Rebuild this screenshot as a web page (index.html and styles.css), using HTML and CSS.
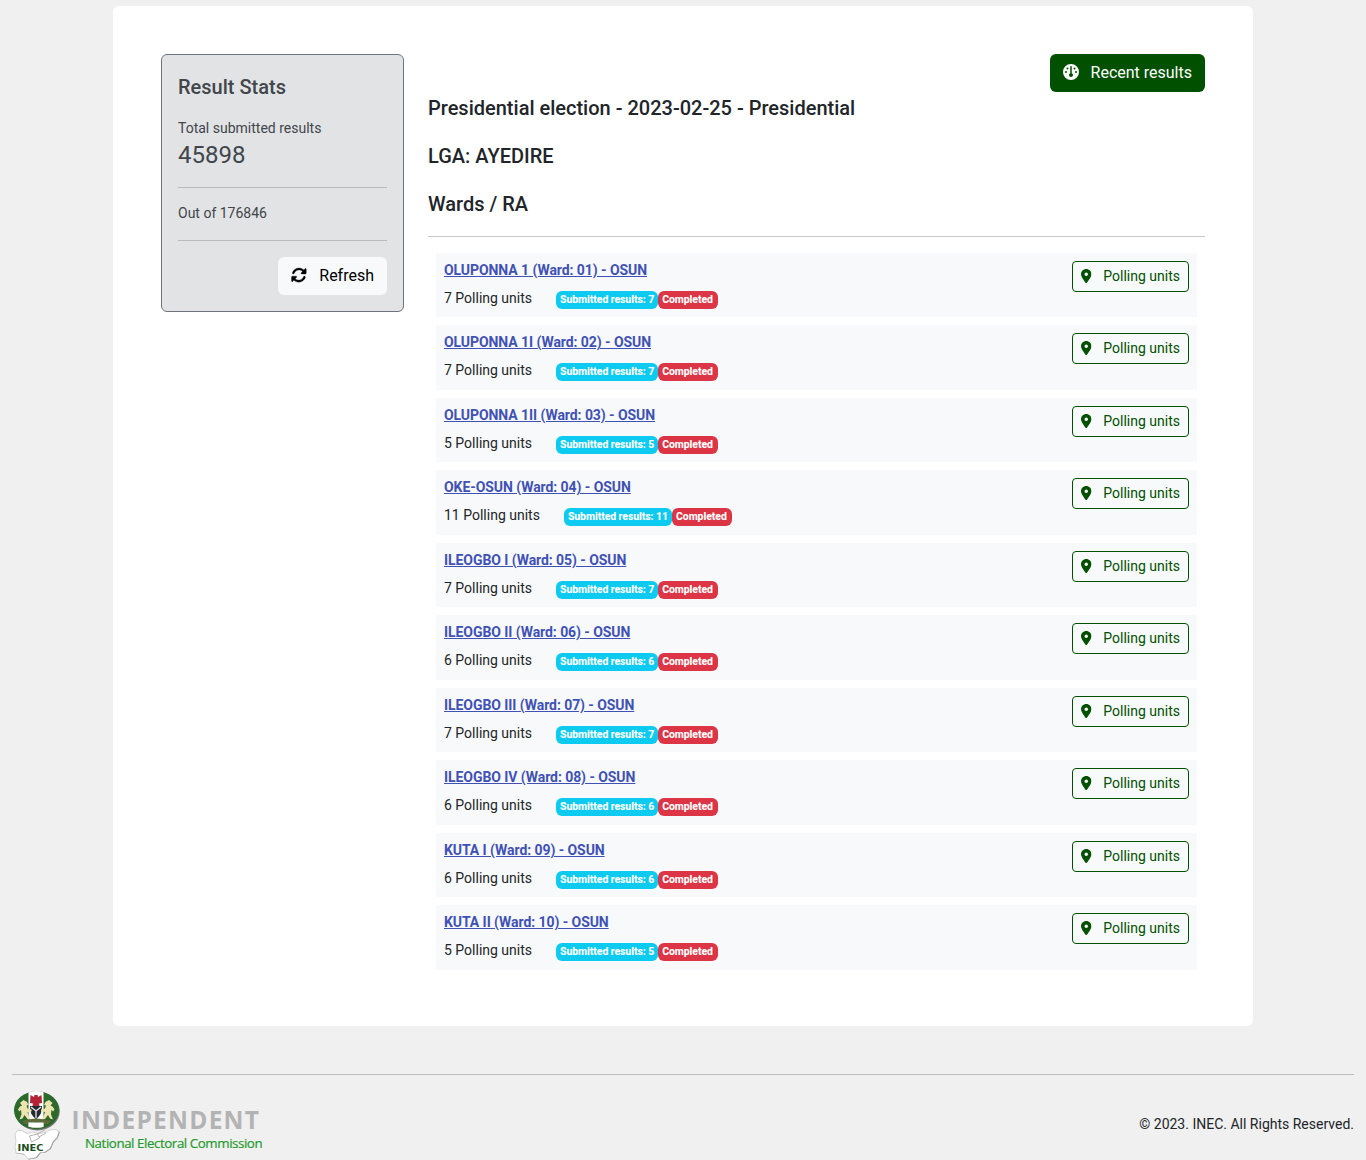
FILE: index.html
```html
<!DOCTYPE html>
<html lang="en">
<head>
<meta charset="utf-8">
<title>INEC Results - Wards</title>
<link rel="stylesheet" href="styles.css">
</head>
<body>
<svg class="defs" aria-hidden="true">
  <symbol id="pin" viewBox="0 0 384 512"><path d="M215.7 499.2C267 435 384 279.4 384 192C384 86 298 0 192 0S0 86 0 192c0 87.400 117 243 168.300 307.200c12.300 15.300 35.100 15.300 47.400 0zM192 128a64 64 0 1 1 0 128 64 64 0 1 1 0-128z"/></symbol>
</svg>
<main class="container">
  <aside class="stats">
    <h5>Result Stats</h5>
    <div class="label">Total submitted results</div>
    <div class="total">45898</div>
    <hr>
    <div class="label">Out of 176846</div>
    <hr>
    <button class="btn btn-light"><svg viewBox="0 0 512 512"><path id="arrow" d="M142.900 142.900c62.200-62.200 162.700-62.500 225.300-1L327 183c-6.900 6.900-8.900 17.200-5.200 26.200s12.500 14.800 22.200 14.800H463.500c13.300 0 24-10.700 24-24V72c0-9.700-5.800-18.500-14.800-22.200s-19.300-1.700-26.200 5.200L413.400 96.600c-87.600-86.500-228.700-86.200-315.800 1C73.200 122 55.600 150.700 44.800 181.400c-5.900 16.700 2.900 34.900 19.500 40.800s34.900-2.900 40.800-19.500c7.700-21.800 20.200-42.300 37.800-59.800z"/><use href="#arrow" transform="rotate(180 252 258)"/></svg>Refresh</button>
  </aside>
  <section class="content">
    <button class="btn btn-green"><svg viewBox="0 0 512 512"><path fill-rule="evenodd" d="M0 256a256 256 0 1 1 512 0A256 256 0 1 1 0 256zM256 64a24 24 0 0 0-24 24v205a64 64 0 1 0 48 0V88a24 24 0 0 0-24-24zM144 112a32 32 0 1 0 0 64 32 32 0 1 0 0-64zM96 224a32 32 0 1 0 0 64 32 32 0 1 0 0-64zM416 224a32 32 0 1 0 0 64 32 32 0 1 0 0-64zM368 112a32 32 0 1 0 0 64 32 32 0 1 0 0-64z"/></svg>Recent results</button>
    <h5>Presidential election - 2023-02-25 - Presidential</h5>
    <h5>LGA: AYEDIRE</h5>
    <h5>Wards / RA</h5>
    <hr>
    <div class="wards">
      <div class="ward"><div><a href="#">OLUPONNA 1 (Ward: 01) - OSUN</a><div class="meta"><span class="units">7 Polling units</span><span class="badge info">Submitted results: 7</span><span class="badge danger">Completed</span></div></div><button class="btn btn-sm"><svg><use href="#pin"/></svg>Polling units</button></div>
      <div class="ward"><div><a href="#">OLUPONNA 1I (Ward: 02) - OSUN</a><div class="meta"><span class="units">7 Polling units</span><span class="badge info">Submitted results: 7</span><span class="badge danger">Completed</span></div></div><button class="btn btn-sm"><svg><use href="#pin"/></svg>Polling units</button></div>
      <div class="ward"><div><a href="#">OLUPONNA 1II (Ward: 03) - OSUN</a><div class="meta"><span class="units">5 Polling units</span><span class="badge info">Submitted results: 5</span><span class="badge danger">Completed</span></div></div><button class="btn btn-sm"><svg><use href="#pin"/></svg>Polling units</button></div>
      <div class="ward"><div><a href="#">OKE-OSUN (Ward: 04) - OSUN</a><div class="meta"><span class="units">11 Polling units</span><span class="badge info">Submitted results: 11</span><span class="badge danger">Completed</span></div></div><button class="btn btn-sm"><svg><use href="#pin"/></svg>Polling units</button></div>
      <div class="ward"><div><a href="#">ILEOGBO I (Ward: 05) - OSUN</a><div class="meta"><span class="units">7 Polling units</span><span class="badge info">Submitted results: 7</span><span class="badge danger">Completed</span></div></div><button class="btn btn-sm"><svg><use href="#pin"/></svg>Polling units</button></div>
      <div class="ward"><div><a href="#">ILEOGBO II (Ward: 06) - OSUN</a><div class="meta"><span class="units">6 Polling units</span><span class="badge info">Submitted results: 6</span><span class="badge danger">Completed</span></div></div><button class="btn btn-sm"><svg><use href="#pin"/></svg>Polling units</button></div>
      <div class="ward"><div><a href="#">ILEOGBO III (Ward: 07) - OSUN</a><div class="meta"><span class="units">7 Polling units</span><span class="badge info">Submitted results: 7</span><span class="badge danger">Completed</span></div></div><button class="btn btn-sm"><svg><use href="#pin"/></svg>Polling units</button></div>
      <div class="ward"><div><a href="#">ILEOGBO IV (Ward: 08) - OSUN</a><div class="meta"><span class="units">6 Polling units</span><span class="badge info">Submitted results: 6</span><span class="badge danger">Completed</span></div></div><button class="btn btn-sm"><svg><use href="#pin"/></svg>Polling units</button></div>
      <div class="ward"><div><a href="#">KUTA I (Ward: 09) - OSUN</a><div class="meta"><span class="units">6 Polling units</span><span class="badge info">Submitted results: 6</span><span class="badge danger">Completed</span></div></div><button class="btn btn-sm"><svg><use href="#pin"/></svg>Polling units</button></div>
      <div class="ward"><div><a href="#">KUTA II (Ward: 10) - OSUN</a><div class="meta"><span class="units">5 Polling units</span><span class="badge info">Submitted results: 5</span><span class="badge danger">Completed</span></div></div><button class="btn btn-sm"><svg><use href="#pin"/></svg>Polling units</button></div>
    </div>
  </section>
</main>
<footer>
  <svg class="logo" width="290" height="70" viewBox="12 1090 290 70">
    <clipPath id="seal"><ellipse cx="36.500" cy="1109.500" rx="22" ry="18.500"/></clipPath>
    <ellipse cx="37.300" cy="1111" rx="22.500" ry="19.500" fill="#777"/>
    <ellipse cx="36.500" cy="1110.300" rx="22.500" ry="19" fill="#2c6a2c"/>
    <g clip-path="url(#seal)">
      <path fill="#fff" d="M28.500 1090h15v40h-15z"/>
      <path fill="#5d6b3a" d="M22 1121q14-5 29 0l-3 3H25z"/>
      <path fill="#fff" stroke="#a9b99b" stroke-width=".5" d="M28.500 1122.500h15v5h-15z"/>
      <path fill="#b32335" d="M30.500 1095l3.500 2 .500-2h3l.5 2 3.500-2 .5 8-3 .500.500 2.500h-7l.500-2.500-3-.5z"/>
      <path fill="#262a30" d="M30 1106h12q.500 8.500-6 13-6.500-4.500-6-13z"/>
      <path fill="none" stroke="#e8ebeb" stroke-width="1.300" d="M31 1107l5 4 5-4M36 1111v7"/>
      <path id="horse" fill="#eee4b0" d="M20 1103l3.500-3 3.500 2 1.500 3-2 .500 1 3 4 1v2l-4 .500 1 3 2 4h-3l-3-4-2 3.500-3 1 2-5-.5-5-1.500 2-1.500-2 2-3 2-1z"/>
      <use href="#horse" transform="matrix(-1 0 0 1 72.500 0)"/>
    </g>
    <path d="M15 1134l3-4 5 1 4 2.500 6-1.500 5 1.500 7-1 5-2.500 6-.500 3 2-2 6-4 4-3 7-6 4-4 0-4 5-8 1.500-4-5-8-1-1-6 1-6z" fill="#8a8a8a" transform="translate(.8 .6)"/>
    <path d="M15 1134l3-4 5 1 4 2.500 6-1.500 5 1.500 7-1 5-2.500 6-.500 3 2-2 6-4 4-3 7-6 4-4 0-4 5-8 1.500-4-5-8-1-1-6 1-6z" fill="#fff" stroke="#bbb" stroke-width=".6"/>
    <path d="M29.500 1136l8-2 2 4-8 4zM37 1134l8-4M39 1137l7-4" fill="none" stroke="#aaa" stroke-width=".9"/>
    <text class="logo-inec" x="17.500" y="1150.500" textLength="26" lengthAdjust="spacingAndGlyphs">INEC</text>
    <text class="logo-main" x="71.500" y="1128.500" textLength="187.500">INDEPENDENT</text>
    <text class="logo-sub" x="85" y="1148">National Electoral Commission</text>
  </svg>
  <span>© 2023. INEC. All Rights Reserved.</span>
</footer>
</body>
</html>
```
FILE: styles.css
```css
* { box-sizing: border-box; }
body {
  margin: 0;
  padding: 6px 0 0;
  height: 1160px;
  overflow: hidden;
  background: #f0f0f0;
  color: #212529;
  font: 400 14px/21px Roboto, sans-serif;
}
.defs { position: absolute; width: 0; height: 0; }
.container {
  display: flex;
  align-items: flex-start;
  gap: 24px;
  width: 1140px;
  height: 1020px;
  margin: 0 auto;
  padding: 48px;
  background: #fff;
  border-radius: 6px;
}
h5 { margin: 0; font: 500 20px/24px Roboto, sans-serif; }
hr { flex: none; width: 100%; height: 1px; margin: 16px 0; border: 0; background: #c8c9ca; }
.stats {
  display: flex;
  flex-direction: column;
  flex: none;
  width: 243px;
  height: 258px;
  padding: 20px 16px 16px;
  border: 1px solid #6c757d;
  border-radius: 6px;
  background: #e2e3e5;
  color: #41464b;
}
.stats h5 { margin-bottom: 19px; }
.label { line-height: 20px; }
.total { font-size: 24px; line-height: 35px; height: 33px; }
.stats hr { background: #babbbe; }
.stats hr:first-of-type { margin-bottom: 15px; }
.stats hr:last-of-type { margin-top: 17px; }
.btn {
  display: flex;
  align-items: center;
  align-self: flex-end;
  height: 38px;
  padding: 0 13px;
  border: 0;
  border-radius: 6px;
  font: 400 16px/24px Roboto, sans-serif;
  white-space: nowrap;
}
.btn svg { width: 16px; height: 16px; margin-right: 12px; fill: currentColor; }
.btn-light { background: #f8f9fa; color: #000; }
.btn-light svg { margin-bottom: 2px; stroke: #000; stroke-width: 10px; }
.btn-green { background: #005000; color: #fff; }
.btn-green svg { margin-bottom: 2px; }
.content { display: flex; flex-direction: column; width: 777px; }
.content h5 { margin-bottom: 24px; }
.content .btn-green + h5 { margin-top: 4px; }
.content hr { margin: -4px 0 15.800px; }
.wards { display: flex; flex-direction: column; gap: 8px; padding: 0 8px; }
.ward {
  display: flex;
  justify-content: space-between;
  height: 64.5px;
  padding: 8px;
  background: #f8f9fa;
}
.ward a { display: block; height: 27px; line-height: 19px; font-weight: 700; letter-spacing: -.07px; color: #3f51b5; }
.meta { display: flex; align-items: flex-start; }
.units { margin-right: 24px; }
.badge {
  height: 18px;
  margin-top: 3px;
  padding: 0 4px;
  border-radius: 6px;
  color: #fff;
  font-size: 10.500px;
  font-weight: 800;
  line-height: 17px;
  letter-spacing: -.09px;
}
.info { background: #0dcaf0; }
.danger { width: 60px; background: #dc3545; }
.btn-sm {
  align-self: flex-start;
  height: 31px;
  padding: 0 8px 1px;
  border: 1px solid #005000;
  border-radius: 4px;
  background: transparent;
  color: #005000;
  font-size: 14px;
}
.btn-sm svg { width: 10.500px; height: 14px; margin-right: 11.500px; }
footer {
  display: flex;
  justify-content: space-between;
  height: 86px;
  margin: 48px 12px 0;
  padding-top: 15px;
  border-top: 1px solid #bcbdbe;
}
footer span { margin-top: 24px; }
.logo { overflow: visible; }
.logo-inec { font: 700 9.500px "DejaVu Sans", sans-serif; fill: #1b4d20; }
.logo-main { font: 700 24.500px "Open Sans", sans-serif; fill: #b3b3b3; }
.logo-sub { font: 400 13.300px "Open Sans", sans-serif; letter-spacing: -.42px; fill: #259a2c; stroke: #259a2c; stroke-width: .2px; }
```
